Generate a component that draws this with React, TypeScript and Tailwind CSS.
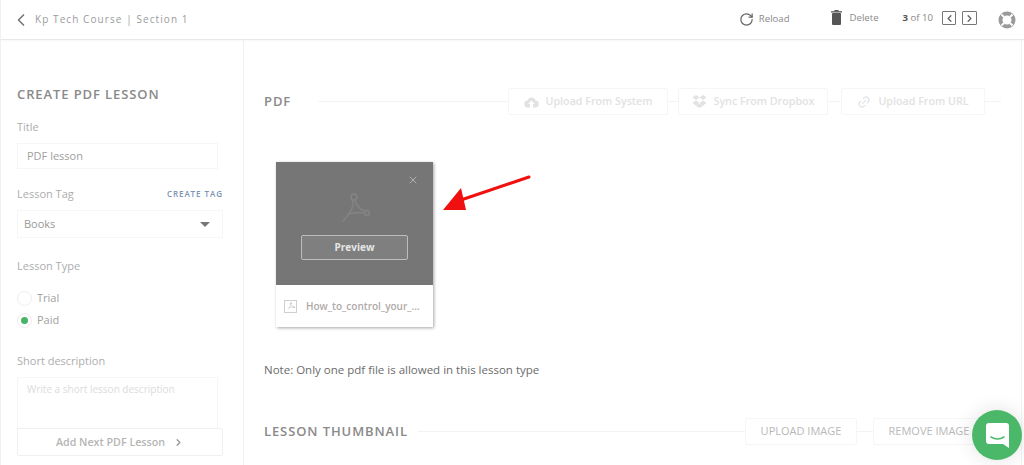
import { ChevronLeft, ChevronRight, RotateCw, Link2, X } from 'lucide-react'

// Acrobat style mark, used large on the card and small beside the file name
const PdfMark = ({ className }: { className: string }) => (
  <svg className={className} viewBox="0 0 32 32" fill="none" stroke="currentColor" strokeWidth="1.5" strokeLinecap="round">
    <circle cx="15" cy="5" r="3" />
    <path d="M14 8 C15 14 12 21 4 29" />
    <path d="M16 8 C17 13 20 17 26 19" />
    <circle cx="28" cy="21" r="2.5" />
    <path d="M9 22 C15 20 20 20 26 21" />
  </svg>
)

const CloudIcon = () => (
  <svg className="w-[15px] h-[12px]" viewBox="0 0 15 12">
    <path d="M4 11.5 A3.5 3.5 0 0 1 3.5 4.5 A4.2 4.2 0 0 1 11.5 4.5 A3.5 3.5 0 0 1 11 11.5 H9 V8 H11 L7.5 4.5 L4 8 H6 V11.5 Z" fill="#e2e2e2" />
  </svg>
)

const DropboxIcon = () => (
  <svg className="w-[15px] h-[13px]" viewBox="0 0 15 13" fill="#e2e2e2">
    <path d="M4 0 L7.5 2.5 L4 5 L0.5 2.5 Z M11 0 L14.5 2.5 L11 5 L7.5 2.5 Z M4 5.5 L7.5 8 L4 10.5 L0.5 8 Z M11 5.5 L14.5 8 L11 10.5 L7.5 8 Z" />
    <path d="M3.5 10.5 L7.5 8.5 L11.5 10.5 L7.5 13 Z" />
  </svg>
)

const TrashIcon = () => (
  <svg className="w-[11px] h-[15px]" viewBox="0 0 11 15" fill="#555">
    <rect x="1" y="3" width="9" height="12" rx="1" />
    <rect x="0" y="1.2" width="11" height="1.3" />
    <rect x="3.5" y="0" width="4" height="1.5" />
  </svg>
)

const BuoyIcon = () => (
  <svg className="w-[18px] h-[18px]" viewBox="0 0 18 18" fill="none">
    <circle cx="9" cy="9" r="6.5" stroke="#9a9a9a" strokeWidth="4" />
    <path d="M3.5 3.5 L6 6 M14.5 3.5 L12 6 M3.5 14.5 L6 12 M14.5 14.5 L12 12" stroke="#fff" strokeWidth="1.8" />
  </svg>
)

const SectionTitle = ({ children }: { children: string }) => (
  <h2 className="text-[13px] leading-none font-semibold tracking-[0.9px] text-[#8a8a8a] whitespace-nowrap">{children}</h2>
)

const FieldLabel = ({ children }: { children: string }) => (
  <label className="block text-[11px] leading-4 text-[#adadad]">{children}</label>
)

const GhostButton = ({ children, className }: { children: React.ReactNode; className: string }) => (
  <div className={`h-[27px] flex items-center justify-center gap-[7px] border border-[#f6f6f6] rounded-[2px] text-[10.7px] font-semibold text-[#e2e2e2] whitespace-nowrap shrink-0 ${className}`}>
    {children}
  </div>
)

const App = () => {
  return (
    <div className="w-[1024px] h-[465px] overflow-hidden relative bg-white font-['Open_Sans',sans-serif] border-l border-[#f0f0f0]">
      {/* Header */}
      <header className="h-[40px] flex items-center border-b border-[#e8e8e8] shadow-[0_1px_2px_rgba(0,0,0,0.04)] pl-[10px] pr-[8px]">
        <ChevronLeft size={20} strokeWidth={2} className="text-[#777]" />
        <span className="ml-[4px] text-[10px] tracking-[1.08px] text-[#9b9b9b]">Kp Tech Course | Section 1</span>
        <div className="ml-auto flex items-center">
          <RotateCw size={15} strokeWidth={2} className="text-[#666] mr-[5px]" />
          <span className="text-[9.6px] text-[#8a8a8a] mr-[41px]">Reload</span>
          <span className="mr-[8px] -mt-[4px]"><TrashIcon /></span>
          <span className="text-[9.6px] text-[#8a8a8a] mr-[24px] -mt-[3px]">Delete</span>
          <span className="text-[9.6px] text-[#888] mr-[9px] -mt-[3px]"><b className="text-[#555]">3</b> of 10</span>
          <span className="w-[14px] h-[14px] border border-[#777] rounded-[1px] flex items-center justify-center mr-[6px] -mt-[3px]">
            <ChevronLeft size={11} strokeWidth={3} className="text-[#666]" />
          </span>
          <span className="w-[15px] h-[14px] border border-[#777] rounded-[1px] flex items-center justify-center mr-[21px] -mt-[3px]">
            <ChevronRight size={11} strokeWidth={3} className="text-[#666]" />
          </span>
          <BuoyIcon />
        </div>
      </header>

      <div className="flex h-[425px]">
        {/* Sidebar */}
        <aside className="w-[243px] shrink-0 border-r border-[#f0f0f0] pl-[16px] pr-[20px] pt-[48px]">
          <SectionTitle>CREATE PDF LESSON</SectionTitle>
          <div className="mt-[18px]"><FieldLabel>Title</FieldLabel></div>
          <div className="mt-[8px] w-[201px] h-[26px] border border-[#f6f6f6] flex items-center pl-[9px] text-[11px] text-[#a0a0a0]">PDF lesson</div>
          <div className="mt-[17px] flex items-center justify-between">
            <FieldLabel>Lesson Tag</FieldLabel>
            <span className="text-[8px] font-semibold tracking-[0.95px] text-[#7d93b5]">CREATE TAG</span>
          </div>
          <div className="mt-[8px] h-[28px] border border-[#f6f6f6] flex items-center justify-between pl-[6px] pr-[12px] text-[11px] text-[#999]">
            Books
            <span className="w-0 h-0 border-x-[5px] border-x-transparent border-t-[5px] border-t-[#777]" />
          </div>
          <div className="mt-[20px]"><FieldLabel>Lesson Type</FieldLabel></div>
          <div className="mt-[16px] flex items-center gap-[5px] h-[16px] text-[11px] text-[#a0a0a0]">
            <span className="w-[15px] h-[15px] rounded-full border border-[#eee]" />
            Trial
          </div>
          <div className="mt-[6px] flex items-center gap-[5px] h-[16px] text-[11px] text-[#a0a0a0]">
            <span className="w-[15px] h-[15px] rounded-full border border-[#eee] flex items-center justify-center">
              <span className="w-[7px] h-[7px] rounded-full bg-[#46b666]" />
            </span>
            Paid
          </div>
          <div className="mt-[25px]"><FieldLabel>Short description</FieldLabel></div>
          <div className="mt-[8px] w-[201px] h-[52px] border border-[#f6f6f6] pl-[9px] pt-[4px] text-[10px] text-[#dcdcdc]">Write a short lesson description</div>
          <div className="h-[28px] -mt-px border border-[#efefef] rounded-[2px] flex items-center justify-center gap-[8px] text-[10.7px] font-semibold text-[#b5b5b5]">
            Add Next PDF Lesson
            <ChevronRight size={11} strokeWidth={3} className="text-[#999]" />
          </div>
        </aside>

        {/* Main */}
        <main className="flex-1 min-w-0 pl-[20px] border-r border-[#f3f3f3] mr-[2px]">
          <div className="mt-[48px] h-[27px] flex items-center pr-[20px]">
            <SectionTitle>PDF</SectionTitle>
            <div className="ml-[27px] flex-1 h-px bg-[#f3f3f3]" />
            <GhostButton className="w-[160px]"><CloudIcon />Upload From System</GhostButton>
            <div className="w-[10px] h-px bg-[#f3f3f3]" />
            <GhostButton className="w-[150px]"><DropboxIcon />Sync From Dropbox</GhostButton>
            <div className="w-[13px] h-px bg-[#f3f3f3]" />
            <GhostButton className="w-[144px]"><Link2 size={14} strokeWidth={2} className="-rotate-45" />Upload From URL</GhostButton>
            <div className="w-[16px] h-px bg-[#f3f3f3]" />
          </div>

          {/* Uploaded file card */}
          <div className="mt-[47px] ml-[12px] w-[157px] shadow-[1px_1px_3px_rgba(0,0,0,0.35)]">
            <div className="h-[123px] bg-[#767676] relative flex flex-col items-center">
              <X size={12} strokeWidth={1.5} className="absolute top-[12px] right-[14px] text-[#c4c4c4]" />
              <PdfMark className="w-[32px] h-[32px] mt-[30px] text-[#848484]" />
              <div className="mt-[11px] w-[107px] h-[25px] border border-[#bdbdbd] rounded-[2px] bg-[#7f7f7f] flex items-center justify-center text-[10px] font-bold text-[#e6e6e6]">Preview</div>
            </div>
            <div className="h-[42px] bg-white flex items-center pl-[8px]">
              <span className="w-[13px] h-[13px] border border-[#cfcfcf] flex items-center justify-center">
                <PdfMark className="w-[8px] h-[8px] text-[#aaa]" />
              </span>
              <span className="ml-[9px] text-[10px] font-semibold text-[#b0aaa8] whitespace-nowrap">How_to_control_your_...</span>
            </div>
          </div>

          <p className="mt-[35px] text-[11.5px] leading-4 text-[#6b6b6b]">Note: Only one pdf file is allowed in this lesson type</p>

          <div className="mt-[40px] h-[27px] flex items-center">
            <SectionTitle>LESSON THUMBNAIL</SectionTitle>
            <div className="ml-[10px] flex-1 h-px bg-[#f3f3f3]" />
            <GhostButton className="w-[112px] !text-[11px] !text-[#b8b8b8] !font-normal">UPLOAD IMAGE</GhostButton>
            <div className="w-[16px] h-px bg-[#f3f3f3]" />
            <GhostButton className="w-[112px] !text-[11px] !text-[#b8b8b8] !font-normal mr-[36px]">REMOVE IMAGE</GhostButton>
          </div>
        </main>
      </div>

      {/* Annotation arrow */}
      <svg className="absolute left-[441px] top-[174px] w-[92px] h-[38px]" viewBox="0 0 92 38">
        <path d="M87 3 L16 27" stroke="#f01010" strokeWidth="3" strokeLinecap="round" />
        <path d="M1 36 L19 14 L24 36 Z" fill="#f01010" />
      </svg>

      {/* Chat launcher */}
      <div className="absolute left-[971px] top-[410px] w-[50px] h-[50px] rounded-full bg-[#4bb869] flex items-center justify-center shadow-[0_0_20px_rgba(0,0,0,0.12)]">
        <svg className="w-[25px] h-[27px]" viewBox="0 0 25 27">
          <path d="M4 1 H21 A3 3 0 0 1 24 4 V26 L18 22 H4 A3 3 0 0 1 1 19 V4 A3 3 0 0 1 4 1 Z" fill="#fff" />
          <path d="M6 15 Q12.5 19 19 15" stroke="#4bb869" strokeWidth="1.5" fill="none" strokeLinecap="round" />
        </svg>
      </div>
    </div>
  )
}

export default App
